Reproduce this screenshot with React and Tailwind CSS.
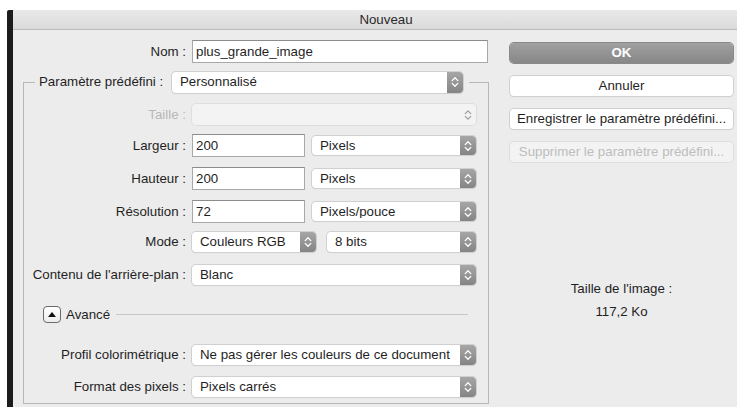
import React from 'react';

// macOS-style "Nouveau" document dialog (Photoshop new file sheet)

const Stepper = ({ disabled }) =>
  disabled ? (
    <span className="flex h-full w-[16px] items-center justify-center">
      <svg width="8" height="12" viewBox="0 0 8 12" fill="none" stroke="#9a9a9a" strokeWidth="1.2" strokeLinecap="round" strokeLinejoin="round">
        <path d="M1.2 4.6 L4 1.8 L6.8 4.6" />
        <path d="M1.2 7.4 L4 10.2 L6.8 7.4" />
      </svg>
    </span>
  ) : (
    <span className="flex h-full w-[16px] items-center justify-center rounded-r-[4px] bg-gradient-to-b from-[#a6a6a6] to-[#858585]">
      <svg width="8" height="12" viewBox="0 0 8 12" fill="none" stroke="#ffffff" strokeWidth="1.3" strokeLinecap="round" strokeLinejoin="round">
        <path d="M1.2 4.6 L4 1.8 L6.8 4.6" />
        <path d="M1.2 7.4 L4 10.2 L6.8 7.4" />
      </svg>
    </span>
  );

const Popup = ({ value, className = '', disabled }) => (
  <div
    className={`flex items-center rounded-[4px] ${
      disabled
        ? 'bg-[#f3f3f3] text-[#b4b4b4] shadow-[0_0_0_1px_#dedede]'
        : 'bg-white text-[#1f1f1f] shadow-[0_0_0_1px_#d0d0d0,0_1px_1px_rgba(0,0,0,0.14)]'
    } ${className}`}
  >
    <span className="flex-1 truncate pl-[8px] leading-none">{value}</span>
    <Stepper disabled={disabled} />
  </div>
);

const Field = ({ value, className = '' }) => (
  <div className={`flex items-center border border-[#a8a8a8] border-t-[#8c8c8c] bg-white pl-[3px] text-[#1f1f1f] ${className}`}>
    {value}
  </div>
);

const Row = ({ label, muted, className = '', children }) => (
  <div className={`flex items-center ${className}`}>
    <span className={`w-[163px] shrink-0 whitespace-nowrap pr-[1px] text-right ${muted ? 'text-[#b8b8b8]' : 'text-[#1f1f1f]'}`}>
      {label}
    </span>
    <div className="ml-[5px] flex items-center">{children}</div>
  </div>
);

const SideButton = ({ children, variant = 'plain', className = '' }) => {
  const look = {
    primary: 'bg-gradient-to-b from-[#a0a0a0] to-[#878787] text-white font-bold shadow-[0_0_0_1px_#8a8a8a]',
    plain: 'bg-white text-[#1f1f1f] shadow-[0_0_0_1px_#d0d0d0,0_1px_1px_rgba(0,0,0,0.14)]',
    off: 'bg-[#f3f3f3] text-[#bdbdbd] shadow-[0_0_0_1px_#dedede]',
  }[variant];
  return (
    <div className={`flex h-[20px] w-[223px] items-center justify-center rounded-[4px] ${look} ${className}`}>
      {children}
    </div>
  );
};

export default function App() {
  return (
    <div className="h-[407px] w-[737px] overflow-hidden bg-white font-['Liberation_Sans',Arial,sans-serif] text-[13.3px] text-[#1f1f1f]">
      <div className="h-[10px]" />
      <div className="flex h-[397px]">
        <div className="w-[7px] shrink-0 bg-white" />
        <div className="w-[6px] shrink-0 rounded-tl-[2px] bg-[#1c1c1c]" />

        <div className="flex flex-1 flex-col bg-[#ececec]">
          {/* title bar */}
          <div className="flex h-[20px] items-center justify-center border-b border-[#bcbcbc] bg-gradient-to-b from-[#e9e9e9] to-[#dadada] pl-[22px] text-[#2a2a2a]">
            Nouveau
          </div>

          <div className="flex flex-1">
            {/* form column */}
            <div className="w-[482px] shrink-0">
              <div className="mt-[10px] flex h-[23px] items-center">
                <span className="w-[174px] pr-[1px] text-right">Nom :</span>
                <Field value="plus_grande_image" className="ml-[5px] h-[23px] w-[296px]" />
              </div>

              <fieldset className="ml-[10px] mt-[8px] w-[466px] border border-[#b7b7b7] px-0 pb-[6px]">
                <legend className="ml-[11px] flex h-[22px] items-center px-[4px]">
                  <span className="w-[128px] whitespace-nowrap">Paramètre prédéfini :</span>
                  <Popup value="Personnalisé" className="ml-[5px] h-[21px] w-[291px]" />
                  <span className="w-[2px]" />
                </legend>

                <Row label="Taille :" muted className="mt-[11px] h-[21px]">
                  <Popup value="" disabled className="h-[21px] w-[284px]" />
                </Row>

                <Row label="Largeur :" className="mt-[9px] h-[23px]">
                  <Field value="200" className="h-[23px] w-[113px]" />
                  <Popup value="Pixels" className="ml-[7px] h-[19px] w-[164px]" />
                </Row>

                <Row label="Hauteur :" className="mt-[10px] h-[23px]">
                  <Field value="200" className="h-[23px] w-[113px]" />
                  <Popup value="Pixels" className="ml-[7px] h-[19px] w-[164px]" />
                </Row>

                <Row label="Résolution :" className="mt-[10px] h-[23px]">
                  <Field value="72" className="h-[23px] w-[113px]" />
                  <Popup value="Pixels/pouce" className="ml-[7px] h-[19px] w-[164px]" />
                </Row>

                <Row label="Mode :" className="mt-[9px] h-[20px]">
                  <Popup value="Couleurs RGB" className="h-[20px] w-[124px]" />
                  <Popup value="8 bits" className="ml-[11px] h-[20px] w-[149px]" />
                </Row>

                <Row label="Contenu de l'arrière-plan :" className="mt-[13px] h-[20px]">
                  <Popup value="Blanc" className="h-[20px] w-[284px]" />
                </Row>

                {/* advanced disclosure */}
                <div className="mt-[21px] flex h-[17px] items-center pl-[19px]">
                  <div className="flex h-[17px] w-[18px] items-center justify-center rounded-[4px] border border-[#6a6a6a] bg-gradient-to-b from-white to-[#ededed]">
                    <svg width="8" height="5" viewBox="0 0 8 5">
                      <path d="M0 5 L4 0 L8 5 Z" fill="#111" />
                    </svg>
                  </div>
                  <span className="ml-[5px]">Avancé</span>
                  <div className="ml-[6px] mr-[20px] h-px flex-1 bg-[#c6c6c6]" />
                </div>

                <Row label="Profil colorimétrique :" className="mt-[22px] h-[20px]">
                  <Popup value="Ne pas gérer les couleurs de ce document" className="h-[20px] w-[284px]" />
                </Row>

                <Row label="Format des pixels :" className="mt-[12px] h-[20px]">
                  <Popup value="Pixels carrés" className="h-[20px] w-[284px]" />
                </Row>
              </fieldset>
            </div>

            {/* buttons and size summary */}
            <div className="ml-[15px] flex w-[223px] flex-col items-center pt-[13px]">
              <SideButton variant="primary">OK</SideButton>
              <SideButton className="mt-[13px]">Annuler</SideButton>
              <SideButton className="mt-[13px]">Enregistrer le paramètre prédéfini...</SideButton>
              <SideButton variant="off" className="mt-[13px]">Supprimer le paramètre prédéfini...</SideButton>
              <div className="mt-[119px] leading-[16px]">Taille de l'image :</div>
              <div className="mt-[7px] leading-[16px]">117,2 Ko</div>
            </div>
          </div>
        </div>
      </div>
    </div>
  );
}
